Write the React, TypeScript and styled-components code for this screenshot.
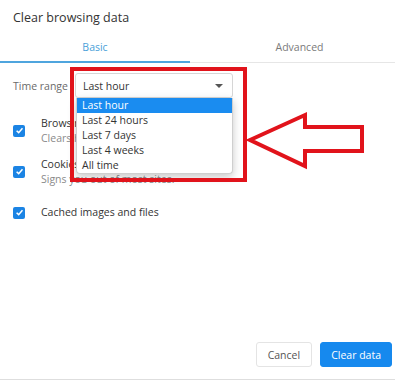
import styled, { createGlobalStyle } from 'styled-components';

const GlobalStyle = createGlobalStyle`
  html, body {
    margin: 0;
    padding: 0;
    background: #ffffff;
  }
  body {
    font-family: "Open Sans", "Noto Sans", sans-serif;
    color: #333333;
  }
`;

const Dialog = styled.div`
  position: relative;
  width: 395px;
  height: 380px;
  display: flex;
  flex-direction: column;
  background: #ffffff;
  overflow: hidden;
  box-sizing: border-box;
  border-bottom: 1px solid #dedede;
`;

const Title = styled.div`
  height: 36px;
  line-height: 35px;
  padding-left: 13px;
  font-size: 12.5px;
  color: #333333;
`;

const TabBar = styled.div`
  display: flex;
  height: 26px;
  border-bottom: 1px solid #e6e6e6;
`;

const Tab = styled.div<{ $active?: boolean; $width?: number }>`
  box-sizing: border-box;
  ${(p) => (p.$width ? `width: ${p.$width}px;` : 'flex: 1;')}
  display: flex;
  align-items: center;
  justify-content: center;
  padding-left: ${(p) => (p.$width ? 0 : 14)}px;
  padding-bottom: 3px;
  font-size: 10.5px;
  color: ${(p) => (p.$active ? '#4a9fd9' : '#7a7a7a')};
  border-bottom: 2px solid ${(p) => (p.$active ? '#4fa5de' : 'transparent')};
  margin-bottom: -1px;
`;

const Body = styled.div`
  padding: 10px 13px 0;
  display: flex;
  flex-direction: column;
`;

const TimeRow = styled.div`
  display: flex;
  align-items: center;
  height: 25px;
  margin-bottom: 12px;
`;

const Label = styled.div`
  width: 62px;
  font-size: 10.5px;
  color: #6a6a6a;
`;

const SelectBox = styled.div`
  position: relative;
  box-sizing: border-box;
  width: 158px;
  height: 25px;
  display: flex;
  align-items: center;
  justify-content: space-between;
  padding: 0 7px;
  border: 1px solid #d6d6d6;
  border-radius: 3px;
  font-size: 10.5px;
  color: #333333;
  background: #ffffff;
`;

const Caret = styled.span`
  width: 0;
  height: 0;
  border-left: 4px solid transparent;
  border-right: 4px solid transparent;
  border-top: 4px solid #555555;
  margin-right: 2px;
`;

const Menu = styled.ul`
  position: absolute;
  top: 24px;
  left: 0;
  width: 157px;
  margin: 0;
  padding: 0;
  list-style: none;
  background: #ffffff;
  border: 1px solid #cfcfcf;
  border-top: none;
  border-radius: 0 0 4px 4px;
  box-shadow: 0 3px 8px rgba(0, 0, 0, 0.22);
  box-sizing: border-box;
  z-index: 2;
`;

const MenuItem = styled.li<{ $selected?: boolean }>`
  height: 15px;
  line-height: 15px;
  padding-left: 5px;
  font-size: 10.5px;
  color: ${(p) => (p.$selected ? '#ffffff' : '#333333')};
  background: ${(p) => (p.$selected ? '#1a8cf0' : 'transparent')};
`;

const CheckRow = styled.div`
  display: flex;
  align-items: center;
  min-height: 41px;
`;

const Box = styled.span`
  flex: none;
  width: 12px;
  height: 12px;
  border-radius: 2px;
  background: #1b84e4;
  display: flex;
  align-items: center;
  justify-content: center;
  margin-right: 16px;
`;

const CheckText = styled.div`
  display: flex;
  flex-direction: column;
  font-size: 10.5px;
  line-height: 14.5px;
  white-space: nowrap;
`;

const Main = styled.span`
  color: #333333;
`;

const Sub = styled.span`
  color: #8a8a8a;
`;

const Footer = styled.div`
  margin-top: auto;
  display: flex;
  justify-content: flex-end;
  gap: 8px;
  padding: 0 3px 12px 0;
`;

const Button = styled.button<{ $primary?: boolean }>`
  height: 25px;
  padding: 0 ${(p) => (p.$primary ? 10 : 11)}px;
  border-radius: 3px;
  font-family: "Open Sans", "Noto Sans", sans-serif;
  font-size: 10.5px;
  border: 1px solid ${(p) => (p.$primary ? '#1689ee' : '#e4e4e4')};
  background: ${(p) => (p.$primary ? '#1689ee' : '#ffffff')};
  color: ${(p) => (p.$primary ? '#ffffff' : '#555555')};
`;

const Highlight = styled.div`
  position: absolute;
  left: 70px;
  top: 67px;
  width: 177px;
  height: 115px;
  box-sizing: border-box;
  border: 4px solid #e1131b;
  z-index: 3;
  pointer-events: none;
`;

const Arrow = styled.svg`
  position: absolute;
  left: 240px;
  top: 105px;
  z-index: 3;
`;

const Tick = () => (
  <svg width="9" height="9" viewBox="0 0 10 10">
    <path d="M1.8 5.2 L4.1 7.4 L8.3 2.6" fill="none" stroke="#ffffff" strokeWidth="1.7" />
  </svg>
);

const ranges = ['Last hour', 'Last 24 hours', 'Last 7 days', 'Last 4 weeks', 'All time'];

const App = () => {
  return (
    <>
      <GlobalStyle />
      <Dialog>
        <Title>Clear browsing data</Title>
        <TabBar>
          <Tab $active $width={190}>Basic</Tab>
          <Tab>Advanced</Tab>
        </TabBar>
        <Body>
          <TimeRow>
            <Label>Time range</Label>
            <SelectBox>
              Last hour
              <Caret />
              <Menu>
                {ranges.map((r, i) => (
                  <MenuItem key={r} $selected={i === 0}>
                    {r}
                  </MenuItem>
                ))}
              </Menu>
            </SelectBox>
          </TimeRow>
          <CheckRow>
            <Box><Tick /></Box>
            <CheckText>
              <Main>Browsing history</Main>
              <Sub>Clears history from all devices.</Sub>
            </CheckText>
          </CheckRow>
          <CheckRow>
            <Box><Tick /></Box>
            <CheckText>
              <Main>Cookies and other site data</Main>
              <Sub>Signs you out of most sites.</Sub>
            </CheckText>
          </CheckRow>
          <CheckRow>
            <Box><Tick /></Box>
            <CheckText>
              <Main>Cached images and files</Main>
            </CheckText>
          </CheckRow>
        </Body>
        <Footer>
          <Button>Cancel</Button>
          <Button $primary>Clear data</Button>
        </Footer>
        <Highlight />
        <Arrow width="130" height="70" viewBox="0 0 130 70">
          <polygon
            points="10,35 65,10 65,22 122,22 122,46 65,46 65,61"
            fill="none"
            stroke="#e1131b"
            strokeWidth="4"
          />
        </Arrow>
      </Dialog>
    </>
  );
};

export default App;
